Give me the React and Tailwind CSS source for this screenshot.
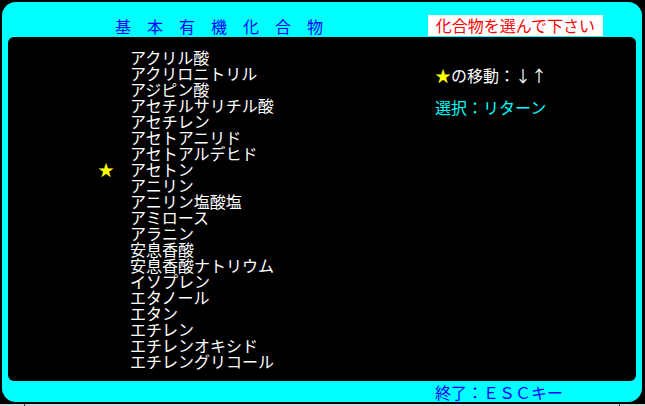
import React from "react";

const compounds = [
  "アクリル酸",
  "アクリロニトリル",
  "アジピン酸",
  "アセチルサリチル酸",
  "アセチレン",
  "アセトアニリド",
  "アセトアルデヒド",
  "アセトン",
  "アニリン",
  "アニリン塩酸塩",
  "アミロース",
  "アラニン",
  "安息香酸",
  "安息香酸ナトリウム",
  "イソプレン",
  "エタノール",
  "エタン",
  "エチレン",
  "エチレンオキシド",
  "エチレングリコール",
];

const selected = 7;

const App = () => {
  return (
    <div
      className="w-[645px] h-[406px] bg-black flex flex-col overflow-hidden text-[16px] leading-[16px]"
      style={{ fontFamily: '"Noto Sans CJK JP", "Noto Sans CJK SC", sans-serif' }}
    >
      <div className="mt-[2px] ml-[2px] w-[640px] h-[400px] bg-[#00ffff] rounded-[14px] flex flex-col">
        {/* header */}
        <div className="h-[35px] flex items-start justify-between pl-[113px] pr-[39px] pt-[13px]">
          <div className="mt-[3px] text-[#0000ff] whitespace-pre">基　本　有　機　化　合　物</div>
          <div className="h-[21px] px-2 bg-white text-[#ff0000] leading-[21px] whitespace-nowrap">
            化合物を選んで下さい
          </div>
        </div>

        {/* main panel */}
        <div className="mx-[6px] h-[344px] bg-black rounded-[6px] flex">
          <div className="w-[427px] pt-[12px] pl-[90px] flex flex-col">
            {compounds.map((name, i) => (
              <div key={name} className="h-[16px] flex text-white whitespace-nowrap">
                <span className="w-[32px] text-[#ffff00]">{i === selected ? "★" : ""}</span>
                <span>{name}</span>
              </div>
            ))}
          </div>
          <div className="pt-[30px] flex flex-col gap-[16px] whitespace-nowrap">
            <div className="text-white">
              <span className="text-[#ffff00]">★</span>の移動：↓↑
            </div>
            <div className="text-[#00ffff]">選択：リターン</div>
          </div>
        </div>

        {/* footer */}
        <div className="pl-[433px] pt-[3px] text-[#0000ff] whitespace-nowrap">終了：ＥＳＣキー</div>
      </div>

      <div className="mt-[2px] h-[2px] bg-[#d8d8d8] flex">
        <div className="ml-[24px] w-[1px] h-[2px] bg-[#404040]" />
        <div className="ml-[594px] w-[1px] h-[2px] bg-[#404040]" />
      </div>
    </div>
  );
};

export default App;
